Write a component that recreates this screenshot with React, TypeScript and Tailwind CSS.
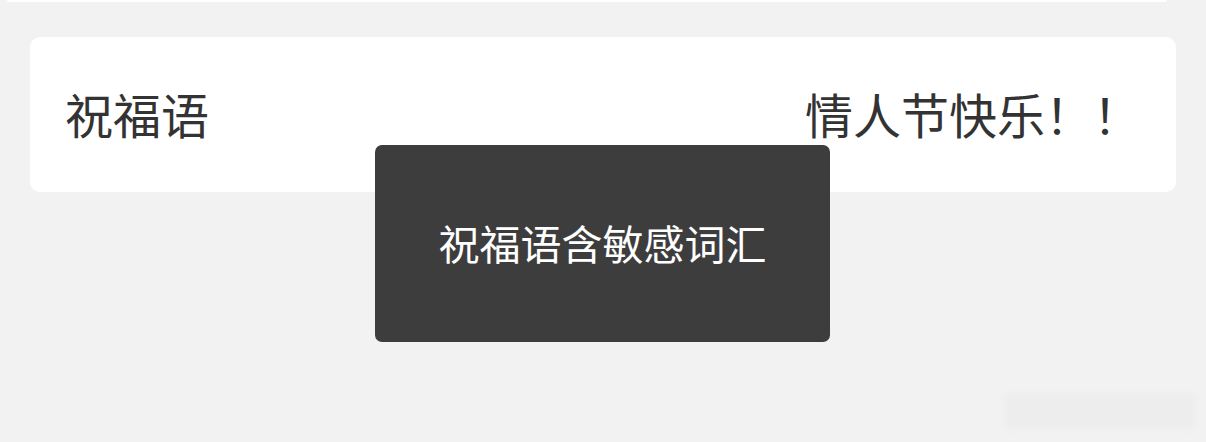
export default function App() {
  return (
    <div
      className="relative w-[1206px] h-[442px] overflow-hidden bg-[#f2f2f2]"
      style={{ fontFamily: '"Noto Sans CJK SC", "Noto Sans", sans-serif' }}
    >
      <div className="ml-[7px] w-[1160px] h-[2px] bg-white rounded-b-[2px]" />

      <div className="ml-[30px] mt-[35px] w-[1146px] h-[155px] bg-white rounded-[10px] flex items-center justify-between pl-[35px] pr-[35px] pb-[3px] text-[48px] text-[#333333] leading-none">
        <span>祝福语</span>
        <span>情人节快乐！！</span>
      </div>

      {/* toast */}
      <div className="absolute left-[375px] top-[145px] w-[455px] h-[197px] rounded-[7px] bg-[#3d3d3d] flex items-center justify-center pb-[2px] text-white text-[41px] leading-none">
        祝福语含敏感词汇
      </div>

      {/* faint watermark */}
      <div className="absolute left-[1005px] top-[393px] w-[190px] h-[36px] bg-[#ededed] blur-[3px] rounded-[4px]" />
    </div>
  );
}
